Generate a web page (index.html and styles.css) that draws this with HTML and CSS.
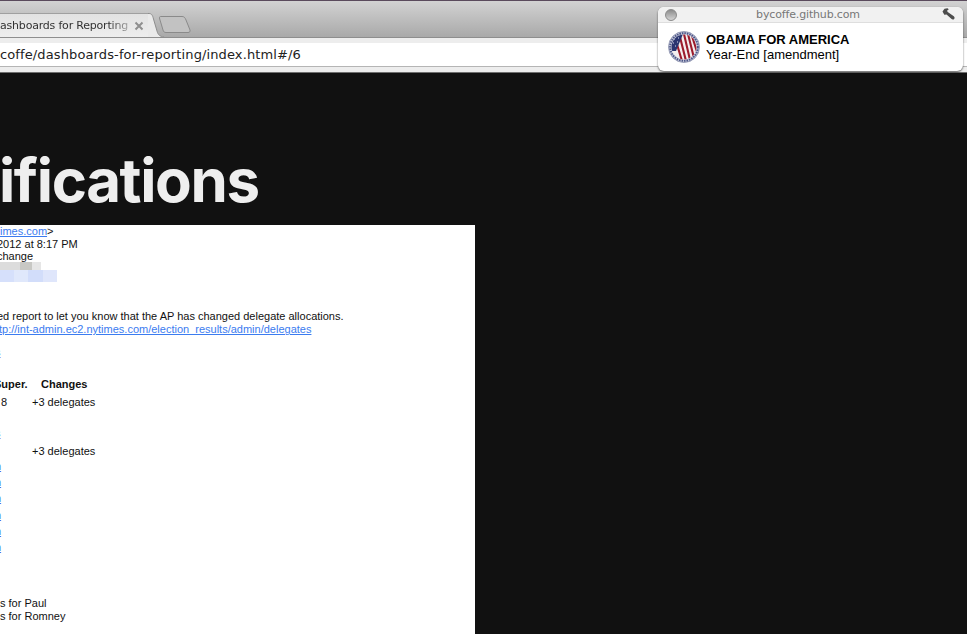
FILE: index.html
```html
<!DOCTYPE html>
<html lang="en">
<head>
<meta charset="UTF-8">
<title>Notifications</title>
<link rel="stylesheet" href="styles.css">
</head>
<body>
<div class="tabbar">
  <div class="tab">
    <span class="tabTitle">ashboards for Reporting</span>
    <svg class="tabClose" width="10" height="10" viewBox="0 0 10 10"><path d="M1.500 1.500L8.500 8.500M8.500 1.500L1.500 8.500" stroke="#8f8f8f" stroke-width="2"/></svg>
    <svg class="tabCurve" width="16" height="24" viewBox="0 0 16 24"><path d="M0 .5H1C3.500 .5 4.500 2 5.500 6L9 18C10 22 12 23.500 16 24H0Z" fill="#eaeaea"/><path d="M0 .5H1C3.500 .5 4.500 2 5.500 6L9 18C10 22 12 23.500 16 24" fill="none" stroke="#8e8e8e"/></svg>
  </div>
  <svg class="newTab" width="32" height="17" viewBox="0 0 32 17"><path d="M1.500 .5H23C25 .5 26 1.500 27 4L31 14C31.500 15.500 30.500 16.500 29 16.500H7C5 16.500 4.500 15.500 4 14L.7 3C.3 1.500 .5 .5 1.500 .5Z" fill="#c2c2c2" stroke="#8a8a8a"/></svg>
</div>
<div class="toolbar">
  <div class="urlField">coffe/dashboards-for-reporting/index.html#/6</div>
</div>
<div class="slide">
  <h1 class="slideTitle">ifications</h1>
  <div class="email">
    <div class="line"><a>imes.com</a>&gt;</div>
    <div class="line cut">2012 at 8:17 PM</div>
    <div class="line cut">change</div>
    <div class="blur">
      <div class="blurGrey"><i></i><i></i><i></i><i></i></div>
      <div class="blurBlue"><i></i><i></i><i></i><i></i></div>
    </div>
    <div class="line report cut">ed report to let you know that the AP has changed delegate allocations.</div>
    <div class="line linkLine"><a class="cut">tp://int-admin.ec2.nytimes.com/election_results/admin/delegates</a></div>
    <div class="row stub"><a>s</a></div>
    <div class="row head"><span class="cutHead">Super.</span><span>Changes</span></div>
    <div class="row first"><span class="num">8</span><span>+3 delegates</span></div>
    <div class="row stub second"><a>s</a></div>
    <div class="row third"><span class="num"></span><span>+3 delegates</span></div>
    <div class="stubs">
      <a>n</a><a>n</a><a>n</a><a>n</a><a>n</a><a>n</a>
    </div>
    <div class="line paul">s for Paul</div>
    <div class="line">s for Romney</div>
  </div>
</div>

<div class="notification">
  <div class="noteHead">
    <span class="noteClose"></span>
    <span class="noteHost">bycoffe.github.com</span>
    <svg class="noteWrench" width="13" height="12" viewBox="0 0 13 12"><path d="M.5 3.500L2.500 .8 5.500 .3 6.800 1.200 5 2.800 5.700 4 11.800 8.300C12.800 9 12.800 10.500 12 11.200 11.200 11.800 10 11.700 9.300 10.800L4.500 6.500 2.300 6.800Z" fill="#4d4d4d"/></svg>
  </div>
  <div class="noteBody">
    <svg class="seal" width="32" height="32" viewBox="0 0 32 32">
      <defs><clipPath id="sealInner"><circle cx="16" cy="16" r="12.500"/></clipPath></defs>
      <circle cx="16" cy="16" r="15.500" fill="#c3c6d8" stroke="#9a9fb8"/>
      <circle cx="16" cy="16" r="13.800" fill="none" stroke="#4c5688" stroke-width="2" stroke-dasharray="1.500 1"/>
      <g clip-path="url(#sealInner)">
        <rect width="32" height="32" fill="#f4eeee"/>
        <path d="M8 10L14 30M12 6L18 30M16 3L22 29M20 3L26 27M24 5L30 24" stroke="#9c1c2c" stroke-width="2.100"/>
        <path d="M2 3H15L8 20H2Z" fill="#2a3570"/>
        <path d="M6 8h1M10 7h1M5 12h1M9 11h1M7 15h1" stroke="#d8dcf0" stroke-width="1"/>
      </g>
    </svg>
    <div class="noteText">
      <div class="noteTitle">OBAMA FOR AMERICA</div>
      <div class="noteMessage">Year-End [amendment]</div>
    </div>
  </div>
</div>
</body>
</html>
```

FILE: styles.css
```css
html, body { margin: 0; padding: 0; }
body { width: 967px; height: 634px; overflow: hidden; position: relative; background-color: #111; font-family: 'Liberation Sans', Arial, sans-serif; }

.tabbar { height: 37px; box-sizing: border-box; border-top: 1px solid #5a4a5c; background: linear-gradient(#d2d2d2, #a9a9a9); display: flex; align-items: flex-end; overflow: hidden; }
.tab { width: 148px; height: 24px; box-sizing: border-box; background: linear-gradient(#e2e2e2, #eeeeee); border-top: 1px solid #a0a0a0; display: flex; align-items: center; position: relative; flex: none; }
.tabTitle { font-family: 'DejaVu Sans', sans-serif; font-size: 11px; color: #333; width: 128px; white-space: nowrap; overflow: hidden; letter-spacing: -0.2px; flex: none; -webkit-mask-image: linear-gradient(to right, #000 85%, rgba(0, 0, 0, .35)); mask-image: linear-gradient(to right, #000 85%, rgba(0, 0, 0, .35)); }
.tabClose { margin-left: 6px; flex: none; }
.tabCurve { position: absolute; left: 148px; top: -1px; }
.newTab { margin-left: 11px; margin-bottom: 4px; flex: none; }

.toolbar { height: 36px; box-sizing: border-box; padding-top: 5px; background: #ededed; border-top: 1px solid #8e8e8e; border-bottom: 1px solid #6f6f6f; }
.urlField { height: 23px; background: #fff; border-bottom: 1px solid #b5b5b5; font-family: 'DejaVu Sans', sans-serif; font-size: 13px; line-height: 23px; color: #222; white-space: nowrap; letter-spacing: 0.12px; }

.slide { height: 561px; overflow: hidden; }
.slideTitle { margin: 0 0 0 -1px; height: 152px; box-sizing: border-box; padding-top: 72px; font-family: Inter, sans-serif; font-weight: 700; font-size: 60px; line-height: 70px; color: #eee; letter-spacing: -1.4px; }
.email { width: 475px; height: 409px; background: #fff; color: #111; font-size: 11px; overflow: hidden; }
.email a { color: #3b7cf0; text-decoration: underline; }
.line { height: 12.600px; line-height: 12.600px; white-space: nowrap; }
.cut { margin-left: -3px; }
a.cut { margin-left: -1px; }
.linkLine { padding-top: 1px; }

.blur { height: 21px; }
.blurGrey { display: flex; height: 8px; margin-top: -1px; }
.blurGrey i { display: block; width: 10px; height: 8px; background: #dcdcdc; }
.blurGrey i:nth-child(3) { background: #c8c8c4; width: 12px; }
.blurGrey i:nth-child(4) { background: #e6e6e6; width: 9px; }
.blurBlue { display: flex; height: 12px; }
.blurBlue i { display: block; height: 12px; width: 14px; background: #d6e0fb; }
.blurBlue i:nth-child(2) { background: #e0e8fb; }
.blurBlue i:nth-child(3) { background: #d2ddfa; width: 15px; }
.blurBlue i:nth-child(4) { background: #dfe6fb; width: 14px; }

.report { margin-top: 27px; }
.row { display: flex; height: 14px; line-height: 14px; white-space: nowrap; }
.stub { margin-top: 9px; margin-left: -5px; }
.head { margin-top: 18px; font-weight: bold; }
.head span:first-child { margin-left: -6px; flex: none; width: 47px; }
.first { margin-top: 4px; }
.num { width: 32px; padding-left: 1px; box-sizing: border-box; }
.second { margin-top: 17px; }
.third { margin-top: 4px; }
.stubs { display: flex; flex-direction: column; margin-top: 0; }
.stubs a { height: 16.200px; line-height: 16.200px; margin-left: -5px; }
.paul { margin-top: 42px; }

.notification { position: absolute; left: 658px; top: 7px; width: 305px; height: 64px; background: #fff; border-radius: 6px; box-shadow: 0 1px 2px rgba(0, 0, 0, .6); overflow: hidden; }
.noteHead { height: 15px; background: #f1f1f1; border-bottom: 1px solid #dedede; display: flex; align-items: center; justify-content: center; position: relative; }
.noteHost { font-family: 'DejaVu Sans', sans-serif; font-size: 11px; color: #777; letter-spacing: -0.15px; margin-left: -5px; }
.noteClose { position: absolute; left: 7px; top: 2px; width: 10px; height: 10px; border-radius: 50%; background: linear-gradient(#8c8c8c, #d4d4d4); border: 1px solid #8a8a8a; }
.noteWrench { position: absolute; right: 8px; top: 1px; }
.noteBody { display: flex; align-items: center; padding: 8px 10px; gap: 6px; }
.seal { flex: none; }
.noteText { line-height: 15px; color: #000; }
.noteTitle { font-size: 13px; font-weight: bold; }
.noteMessage { font-size: 13px; }
```
